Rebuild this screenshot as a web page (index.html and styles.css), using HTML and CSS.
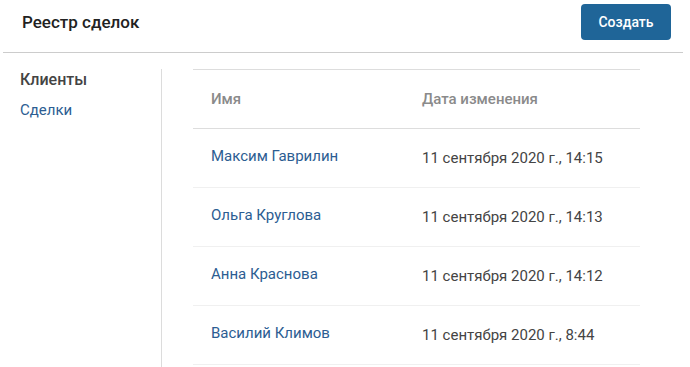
FILE: index.html
```html
<!DOCTYPE html>
<html lang="ru">
<head>
<meta charset="utf-8">
<title>Реестр сделок</title>
<link rel="stylesheet" href="styles.css">
</head>
<body>
<header class="topbar">
  <h1 class="title">Реестр сделок</h1>
  <button class="btn-primary" type="button">Создать</button>
</header>
<div class="layout">
  <nav class="sidebar">
    <div class="nav-item nav-active">Клиенты</div>
    <a class="nav-item nav-link" href="#">Сделки</a>
  </nav>
  <main class="content">
    <div class="table">
      <div class="row row-head">
        <div class="cell cell-name">Имя</div>
        <div class="cell cell-date">Дата изменения</div>
      </div>
      <div class="row">
        <div class="cell cell-name"><a class="link" href="#">Максим Гаврилин</a></div>
        <div class="cell cell-date">11 сентября 2020 г., 14:15</div>
      </div>
      <div class="row">
        <div class="cell cell-name"><a class="link" href="#">Ольга Круглова</a></div>
        <div class="cell cell-date">11 сентября 2020 г., 14:13</div>
      </div>
      <div class="row">
        <div class="cell cell-name"><a class="link" href="#">Анна Краснова</a></div>
        <div class="cell cell-date">11 сентября 2020 г., 14:12</div>
      </div>
      <div class="row">
        <div class="cell cell-name"><a class="link" href="#">Василий Климов</a></div>
        <div class="cell cell-date">11 сентября 2020 г., 8:44</div>
      </div>
    </div>
  </main>
</div>
</body>
</html>
```
FILE: styles.css
```css
* { box-sizing: border-box; }
html, body { height: 100%; }
body {
  margin: 0;
  background: #fff;
  font-family: Roboto, "Noto Sans", Arial, sans-serif;
  color: #333;
  display: flex;
  flex-direction: column;
  overflow: hidden;
}
.topbar {
  height: 53px;
  margin: 0 7px 0 3px;
  padding: 0 12px 0 19px;
  border-bottom: 1px solid #cccccc;
  display: flex;
  align-items: center;
  justify-content: space-between;
}
.title {
  margin: 0 0 8px;
  font-size: 17px;
  font-weight: 500;
  color: #222;
}
.btn-primary {
  width: 90px;
  height: 36px;
  margin-bottom: 8px;
  border: none;
  border-radius: 4px;
  background: #1f6598;
  color: #fff;
  font-family: inherit;
  font-size: 14px;
  font-weight: 500;
}
.layout {
  flex: 1;
  display: flex;
  margin-left: 3px;
  padding-top: 16px;
}
.sidebar {
  width: 159px;
  border-right: 1px solid #dcdcdc;
  padding: 0 0 0 17px;
  display: flex;
  flex-direction: column;
}
.nav-item {
  height: 30px;
  line-height: 22px;
  font-size: 15px;
  text-decoration: none;
}
.nav-active { font-size: 16px; font-weight: 500; color: #444; }
.nav-link { color: #2c5d92; }
.content {
  padding-left: 31px;
}
.table { width: 447px; border-top: 1px solid #dddddd; }
.row {
  display: flex;
  align-items: center;
  height: 59px;
  border-bottom: 1px solid #f0f0f0;
}
.row-head {
  height: 59px;
  border-bottom: 1px solid #dddddd;
  color: #8a8a8a;
  font-size: 15px;
  font-weight: 500;
}
.cell { padding-left: 18px; }
.cell-name { width: 211px; }
.cell-date { flex: 1; }
.row:not(.row-head) .cell-name { padding-bottom: 4px; font-size: 15px; }
.row:not(.row-head) .cell-date { font-size: 15px; color: #444; }
.link { color: #2c5d92; text-decoration: none; }
```
